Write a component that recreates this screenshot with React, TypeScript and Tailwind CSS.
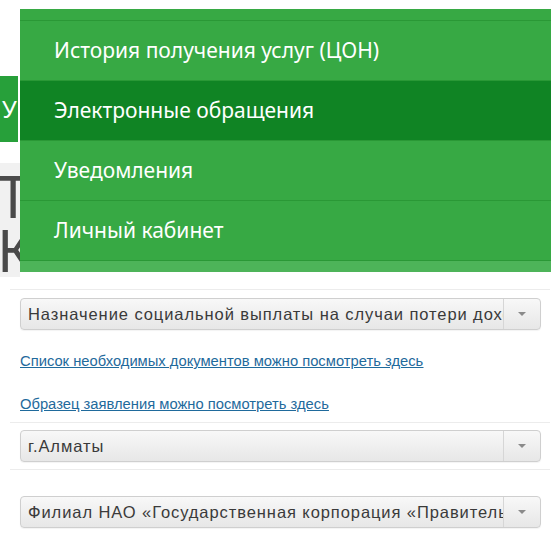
import React from 'react';

const menuItems = [
  { label: 'История получения услуг (ЦОН)', active: false },
  { label: 'Электронные обращения', active: true },
  { label: 'Уведомления', active: false },
  { label: 'Личный кабинет', active: false },
];

function Select({ value }: { value: string }) {
  return (
    <div className="flex h-[32px] rounded-[4px] border border-[#cfcfcf] bg-gradient-to-b from-[#f8f8f8] to-[#e7e7e7] shadow-[0_1px_1px_rgba(0,0,0,0.05)]">
      <div className="flex-1 min-w-0 overflow-hidden whitespace-nowrap pl-[7px] pr-[5px] text-[16.5px] leading-[30px] tracking-[0.92px] text-[#3a3a3a]">
        {value}
      </div>
      <div className="w-[37px] flex items-center justify-center border-l border-[#d6d6d6]">
        <div className="w-0 h-0 border-l-[4px] border-r-[4px] border-t-[4px] border-l-transparent border-r-transparent border-t-[#8a8a8a]" />
      </div>
    </div>
  );
}

export default function App() {
  return (
    <div className="relative w-[560px] h-[560px] overflow-hidden bg-white font-['Liberation_Sans',Arial,sans-serif]">
      {/* page behind the menu */}
      <div className="h-[76px]" />
      <div className="h-[66px] w-[18px] bg-[#27a03a] text-white text-[24px] pl-[2px] flex items-center font-['Noto_Sans',sans-serif]">
        У
      </div>
      <div className="h-[21px]" />
      <div className="h-[114px] w-[20px] bg-[#f1f1f1] text-[#4a4a4a] text-[58px] leading-[54px] pt-[6px] font-['Noto_Sans',sans-serif]">
        <div className="-ml-[3px]">Т</div>
        <div className="-ml-[3px]">К</div>
      </div>
      <div className="h-[12px]" />

      <div className="pl-[10px] pr-[10px]">
        <div className="border-t border-[#ececec] pt-[8px] pl-[10px] pr-[9px]">
          <Select value="Назначение социальной выплаты на случаи потери дохода" />
          <div className="pt-[21px] text-[14.75px] leading-[20px] text-[#1f6a9c] underline">
            <a href="#">Список необходимых документов можно посмотреть здесь</a>
          </div>
          <div className="pt-[23px] text-[14.75px] leading-[20px] text-[#1f6a9c] underline">
            <a href="#">Образец заявления можно посмотреть здесь</a>
          </div>
        </div>
        <div className="mt-[8px] border-t border-[#ececec] pt-[7px] pb-[7px] pl-[10px] pr-[9px]">
          <Select value="г.Алматы" />
        </div>
        <div className="border-t border-[#ececec] pt-[26px] pl-[10px] pr-[9px]">
          <Select value="Филиал НАО «Государственная корпорация «Правительство для граждан»" />
        </div>
      </div>

      {/* dropdown menu */}
      <div className="absolute left-[20px] top-[9px] w-[531px] bg-[#37a944] font-['Noto_Sans',sans-serif] text-white">
        <div className="h-[12px] border-b border-[#2a9836]" />
        {menuItems.map((item) => (
          <div
            key={item.label}
            className={`h-[60px] border-b border-[#2a9836] pl-[34px] flex items-center text-[21px] ${item.active ? 'bg-[#108424]' : ''}`}
          >
            {item.label}
          </div>
        ))}
        <div className="h-[11px] bg-[#4db459]" />
      </div>
    </div>
  );
}
